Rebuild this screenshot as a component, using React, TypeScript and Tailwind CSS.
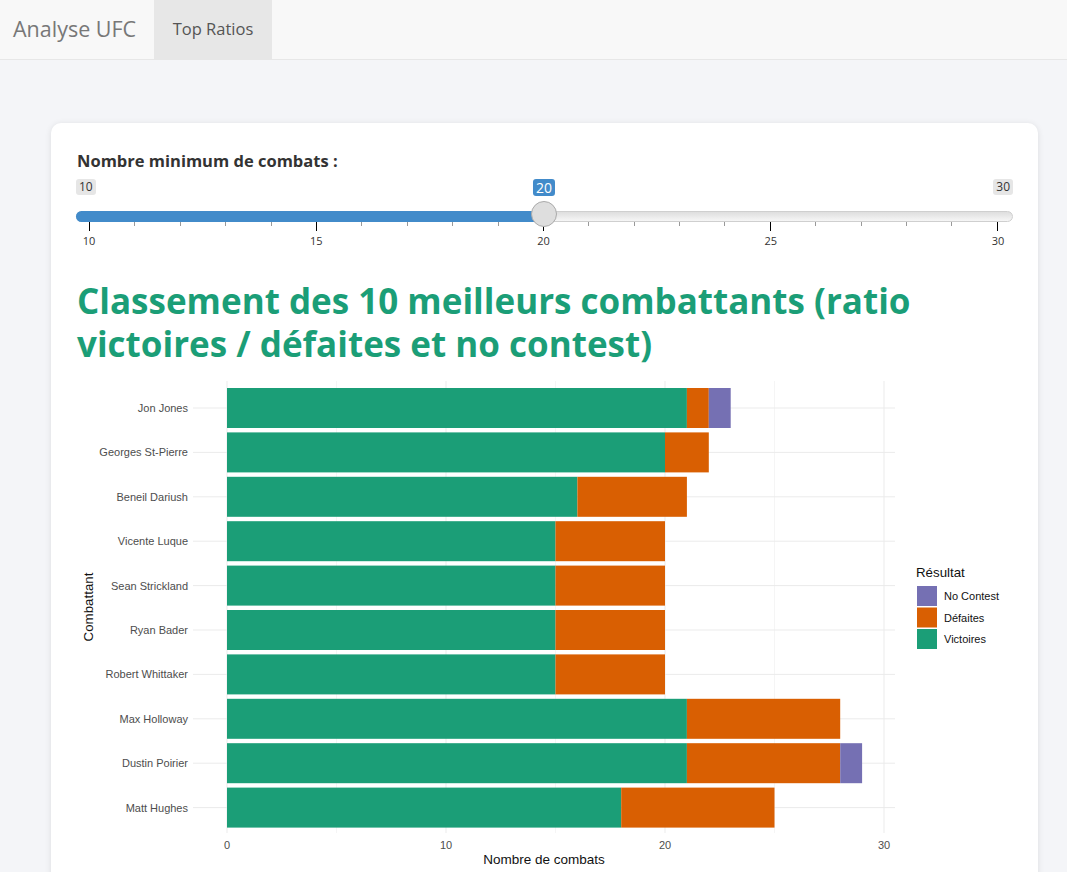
import React from "react";

type Row = { name: string; v: number; d: number; nc: number };

const rows: Row[] = [
  { name: "Jon Jones", v: 21, d: 1, nc: 1 },
  { name: "Georges St-Pierre", v: 20, d: 2, nc: 0 },
  { name: "Beneil Dariush", v: 16, d: 5, nc: 0 },
  { name: "Vicente Luque", v: 15, d: 5, nc: 0 },
  { name: "Sean Strickland", v: 15, d: 5, nc: 0 },
  { name: "Ryan Bader", v: 15, d: 5, nc: 0 },
  { name: "Robert Whittaker", v: 15, d: 5, nc: 0 },
  { name: "Max Holloway", v: 21, d: 7, nc: 0 },
  { name: "Dustin Poirier", v: 21, d: 7, nc: 1 },
  { name: "Matt Hughes", v: 18, d: 7, nc: 0 },
];

const GREEN = "#1b9e77";
const ORANGE = "#d95f02";
const PURPLE = "#7570b3";

// x en pixels de page pour une valeur de l'axe
const X0 = 227;
const UNIT = 21.9;
const px = (n: number) => X0 + n * UNIT;

function Slider() {
  const ticks = Array.from({ length: 21 }, (_, i) => i);
  return (
    <div className="mt-[7px] flex w-[937px] -ml-px flex-col">
      {/* valeurs min / max et valeur choisie */}
      <div className="relative flex h-[17px] items-start justify-between text-[12px] leading-[16px] text-[#333]">
        <span className="rounded-[3px] bg-[#e6e6e6] px-[3px]">10</span>
        <span className="absolute left-[468px] top-0 -translate-x-1/2 rounded-[3px] bg-[#428bca] px-[3px] text-[14px] leading-[17px] text-white">
          20
        </span>
        <span className="rounded-[3px] bg-[#e6e6e6] px-[3px]">30</span>
      </div>
      {/* piste */}
      <div className="relative mt-[15px] h-[11px] rounded-full border border-[#cfcfcf] bg-gradient-to-b from-[#dedede] to-[#f6f6f6]">
        <div className="absolute -left-px -top-px h-[11px] w-[470px] rounded-l-full bg-[#428bca]" />
        <div className="absolute left-[454px] top-[-11px] h-[26px] w-[26px] rounded-full border border-[#aaa] bg-[#dedede]" />
      </div>
      {/* graduations */}
      <div className="flex h-[9px] items-start justify-between pl-[13px] pr-[15px]">
        {ticks.map((i) =>
          i % 5 === 0 ? (
            <span key={i} className="h-[9px] w-px bg-black" />
          ) : (
            <span key={i} className="h-[4px] w-px bg-[#999]" />
          )
        )}
      </div>
      <div className="mt-[3px] flex justify-between pl-[3px] pr-[5px] text-[11px] leading-[14px] text-[#333]">
        {[10, 15, 20, 25, 30].map((v) => (
          <span key={v} className="w-[20px] text-center">
            {v}
          </span>
        ))}
      </div>
    </div>
  );
}

function Chart() {
  const top = 388;
  const pitch = 44.4;
  const h = 40;
  return (
    <svg
      className="mt-[7px] block"
      width={936}
      height={500}
      viewBox="77 372 936 500"
      fontFamily="'Liberation Sans', Arial, sans-serif"
    >
      {/* grille mineure */}
      {[5, 15, 25].map((v) => (
        <line key={v} x1={px(v)} x2={px(v)} y1={381} y2={833} stroke="#f5f5f5" strokeWidth={1} />
      ))}
      {/* grille majeure */}
      {[0, 10, 20, 30].map((v) => (
        <line key={v} x1={px(v)} x2={px(v)} y1={381} y2={833} stroke="#ebebeb" strokeWidth={1} />
      ))}
      {rows.map((r, i) => {
        const cy = top + i * pitch + h / 2;
        return (
          <line key={r.name} x1={193} x2={895} y1={cy} y2={cy} stroke="#ebebeb" strokeWidth={1} />
        );
      })}
      {rows.map((r, i) => {
        const y = top + i * pitch;
        return (
          <g key={r.name}>
            <rect x={px(0)} y={y} width={px(r.v) - px(0)} height={h} fill={GREEN} />
            <rect x={px(r.v)} y={y} width={px(r.v + r.d) - px(r.v)} height={h} fill={ORANGE} />
            {r.nc > 0 && (
              <rect
                x={px(r.v + r.d)}
                y={y}
                width={px(r.v + r.d + r.nc) - px(r.v + r.d)}
                height={h}
                fill={PURPLE}
              />
            )}
            <text x={188} y={y + h / 2 + 4} fontSize={11} fill="#4d4d4d" textAnchor="end">
              {r.name}
            </text>
          </g>
        );
      })}
      {[0, 10, 20, 30].map((v) => (
        <text key={v} x={px(v)} y={849} fontSize={11} fill="#4d4d4d" textAnchor="middle">
          {v}
        </text>
      ))}
      <text x={544} y={864} fontSize={13.5} fill="#111" textAnchor="middle">
        Nombre de combats
      </text>
      <text
        x={93}
        y={607}
        fontSize={13.3}
        fill="#111"
        textAnchor="middle"
        transform="rotate(-90 93 607)"
      >
        Combattant
      </text>
      {/* légende */}
      <text x={916} y={577} fontSize={13.3} fill="#111">
        Résultat
      </text>
      <rect x={917} y={586} width={20} height={20} fill={PURPLE} />
      <rect x={917} y={607.5} width={20} height={20} fill={ORANGE} />
      <rect x={917} y={629} width={20} height={20} fill={GREEN} />
      <text x={944} y={600} fontSize={11} fill="#111">
        No Contest
      </text>
      <text x={944} y={621.5} fontSize={11} fill="#111">
        Défaites
      </text>
      <text x={944} y={643} fontSize={11} fill="#111">
        Victoires
      </text>
    </svg>
  );
}

export default function App() {
  return (
    <div className="min-h-screen bg-[#f4f5f8] font-['Open_Sans',sans-serif]">
      <nav className="flex h-[60px] items-stretch border-b border-[#e7e7e7] bg-[#f8f8f8]">
        <div className="flex w-[154px] items-center pl-[13px] text-[21.5px] text-[#777]">Analyse UFC</div>
        <div className="flex w-[118px] items-center justify-center bg-[#e7e7e7] text-[16.5px] text-[#555]">
          Top Ratios
        </div>
      </nav>
      <main className="pt-[63px] pb-[30px]">
        <div className="ml-[51px] w-[987px] rounded-[10px] bg-white pb-[26px] pl-[26px] pt-[27px] shadow-[0_1px_6px_rgba(0,0,0,0.1)]">
          <label className="block text-[16.5px] font-bold leading-[22px] text-[#333]">
            Nombre minimum de combats :
          </label>
          <Slider />
          <h2 className="mt-[31px] pr-[60px] text-[35px] font-bold leading-[43px] text-[#1b9e77]">
            Classement des 10 meilleurs combattants (ratio victoires / défaites et no contest)
          </h2>
          <Chart />
        </div>
      </main>
    </div>
  );
}
